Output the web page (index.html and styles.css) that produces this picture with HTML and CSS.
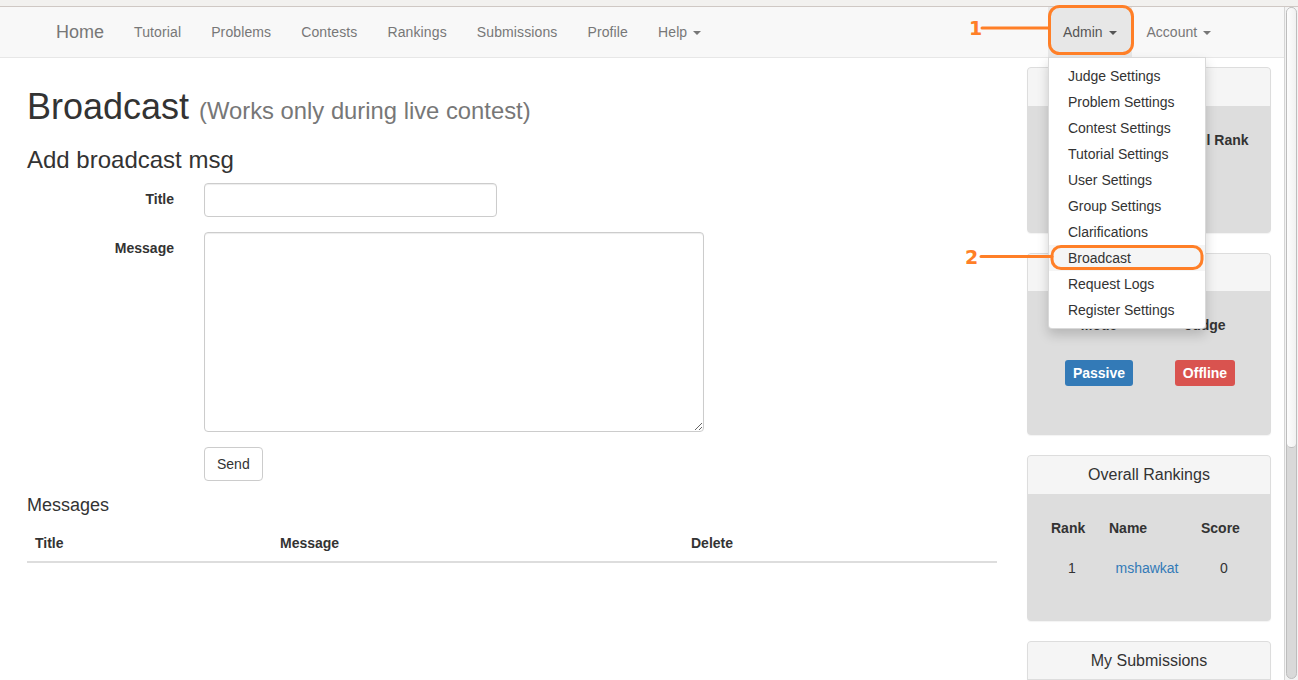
FILE: index.html
```html
<!DOCTYPE html>
<html lang="en">
<head>
<meta charset="utf-8">
<title>Broadcast</title>
<link rel="stylesheet" href="styles.css">
</head>
<body>
<div class="strip"></div>
<div class="window">
  <div class="page">
    <nav class="navbar">
      <ul class="nav">
        <li class="brand"><a href="#">Home</a></li>
        <li><a href="#">Tutorial</a></li>
        <li><a href="#">Problems</a></li>
        <li><a href="#">Contests</a></li>
        <li><a href="#">Rankings</a></li>
        <li><a href="#">Submissions</a></li>
        <li><a href="#">Profile</a></li>
        <li><a href="#">Help <span class="caret"></span></a></li>
      </ul>
      <ul class="nav nav-right">
        <li class="open"><a href="#">Admin <span class="caret"></span></a>
          <ul class="dropdown">
            <li><a href="#">Judge Settings</a></li>
            <li><a href="#">Problem Settings</a></li>
            <li><a href="#">Contest Settings</a></li>
            <li><a href="#">Tutorial Settings</a></li>
            <li><a href="#">User Settings</a></li>
            <li><a href="#">Group Settings</a></li>
            <li><a href="#">Clarifications</a></li>
            <li class="active"><a href="#">Broadcast</a></li>
            <li><a href="#">Request Logs</a></li>
            <li><a href="#">Register Settings</a></li>
          </ul>
        </li>
        <li><a href="#">Account <span class="caret"></span></a></li>
      </ul>
    </nav>

    <div class="content">
      <main class="main">
        <h1>Broadcast <small>(Works only during live contest)</small></h1>
        <h3>Add broadcast msg</h3>
        <form class="form">
          <div class="fgroup">
            <label for="title">Title</label>
            <div><input id="title" class="input-title" type="text"></div>
          </div>
          <div class="fgroup">
            <label for="msg">Message</label>
            <div><textarea id="msg" class="input-msg"></textarea></div>
          </div>
          <div class="fgroup">
            <span></span>
            <div><button type="button" class="btn">Send</button></div>
          </div>
        </form>
        <h4>Messages</h4>
        <table class="msg-table">
          <thead>
            <tr><th class="c-title">Title</th><th class="c-msg">Message</th><th class="c-del">Delete</th></tr>
          </thead>
        </table>
      </main>

      <aside class="sidebar">
        <div class="panel">
          <div class="panel-heading">My Status</div>
          <div class="panel-body">
            <table class="stbl two">
              <tr><th>Contest Rank</th><th>Overall Rank</th></tr>
              <tr class="datarow"><td>&nbsp;</td><td>&nbsp;</td></tr>
            </table>
          </div>
        </div>
        <div class="panel">
          <div class="panel-heading">Judge Status</div>
          <div class="panel-body body-judge">
            <table class="stbl two">
              <tr><th>Mode</th><th>Judge</th></tr>
              <tr class="badgerow"><td><span class="badge blue">Passive</span></td><td><span class="badge red">Offline</span></td></tr>
            </table>
          </div>
        </div>
        <div class="panel">
          <div class="panel-heading">Overall Rankings</div>
          <div class="panel-body">
            <table class="stbl three">
              <tr><th>Rank</th><th>Name</th><th>Score</th></tr>
              <tr class="datarow"><td>1</td><td><a href="#">mshawkat</a></td><td>0</td></tr>
            </table>
          </div>
        </div>
        <div class="panel">
          <div class="panel-heading">My Submissions</div>
          <div class="panel-body body-empty"></div>
        </div>
      </aside>
    </div>
  </div>
  <div class="scrollbar"><div class="track"><div class="thumb"></div></div></div>
</div>

<svg class="annot" width="1298" height="680" viewBox="0 0 1298 680">
  <rect x="1049.5" y="6.5" width="83" height="47" rx="10" ry="10" class="mark"/>
  <line x1="982" y1="28" x2="1049" y2="28" class="mark"/>
  <text x="969" y="35" class="num">1</text>
  <rect x="1052" y="246.5" width="150" height="22" rx="9" ry="9" class="mark"/>
  <line x1="981" y1="256.5" x2="1052" y2="256.5" class="mark"/>
  <text x="965" y="264" class="num">2</text>
</svg>
</body>
</html>
```

FILE: styles.css
```css
* { box-sizing: border-box; }

html, body {
  margin: 0;
  padding: 0;
  width: 1298px;
  height: 680px;
  overflow: hidden;
}

body {
  position: relative;
  font-family: "Liberation Sans", Arial, sans-serif;
  font-size: 14px;
  line-height: 20px;
  color: #333;
  background: #fff;
}

.strip {
  height: 7px;
  background: #f2f1ef;
  border-bottom: 1px solid #cfc8c4;
}

.window {
  display: flex;
  height: 673px;
}

.page {
  flex: 1;
  overflow: hidden;
  background: #fff;
}

/* navbar */
.navbar {
  display: flex;
  justify-content: space-between;
  height: 51px;
  padding: 0 58px 0 41px;
  background: #f8f8f8;
  border-bottom: 1px solid #e7e7e7;
}

.nav {
  display: flex;
  list-style: none;
  margin: 0;
  padding: 0;
}

.nav > li {
  position: relative;
}

.nav > li > a {
  display: block;
  padding: 15px;
  line-height: 20px;
  font-size: 14px;
  letter-spacing: 0.12px;
  color: #777;
  text-decoration: none;
}

.nav-right > li > a {
  letter-spacing: 0;
}

.nav > li.brand > a {
  font-size: 18px;
  letter-spacing: 0;
  color: #777;
}

.nav > li.open > a {
  background: #e7e7e7;
  color: #555;
}

.caret {
  display: inline-block;
  width: 0;
  height: 0;
  margin-left: 2px;
  vertical-align: middle;
  border-top: 4px solid;
  border-right: 4px solid transparent;
  border-left: 4px solid transparent;
}

.dropdown {
  position: absolute;
  top: 100%;
  left: 0;
  z-index: 10;
  width: 158px;
  margin: 0;
  padding: 5px 0;
  list-style: none;
  background: #fff;
  border: 1px solid rgba(0, 0, 0, .15);
  border-radius: 0 0 4px 4px;
  box-shadow: 0 6px 12px rgba(0, 0, 0, .175);
}

.dropdown li a {
  display: block;
  padding: 3px 19px;
  line-height: 20px;
  color: #333;
  text-decoration: none;
  white-space: nowrap;
}

.dropdown li.active a {
  background: #f5f5f5;
}

/* layout */
.content {
  display: flex;
  gap: 30px;
  padding: 0 13px 0 27px;
}

.main {
  flex: 1;
}

.sidebar {
  width: 244px;
  flex: none;
  margin-top: 9px;
}

h1 {
  margin: 29px 0 10px;
  font-size: 36px;
  line-height: 40px;
  font-weight: normal;
}

h1 small {
  font-size: 23.8px;
  color: #777;
}

h3 {
  margin: 16px 0 10px;
  font-size: 24px;
  line-height: 26.4px;
  font-weight: normal;
}

h4 {
  margin: 1px 0 10px;
  font-size: 18px;
  line-height: 19.8px;
  font-weight: normal;
}

/* form */
.form {
  margin: 0;
}

.fgroup {
  display: grid;
  grid-template-columns: 147px 1fr;
  column-gap: 30px;
  margin-bottom: 15px;
}

.fgroup label {
  text-align: right;
  font-weight: bold;
  padding-top: 6px;
  line-height: 20px;
}

.input-title,
.input-msg {
  display: block;
  font-family: "Liberation Sans", Arial, sans-serif;
  font-size: 14px;
  color: #555;
  background: #fff;
  border: 1px solid #ccc;
  border-radius: 4px;
  box-shadow: inset 0 1px 1px rgba(0, 0, 0, .075);
}

.input-title {
  width: 293px;
  height: 34px;
  padding: 6px 12px;
}

.input-msg {
  width: 500px;
  height: 200px;
  padding: 6px 12px;
  margin: 0;
}

.btn {
  display: inline-block;
  height: 34px;
  padding: 6px 12px;
  font-family: "Liberation Sans", Arial, sans-serif;
  font-size: 14px;
  line-height: 20px;
  color: #333;
  background: #fff;
  border: 1px solid #ccc;
  border-radius: 4px;
}

/* messages table */
.msg-table {
  width: 100%;
  border-collapse: collapse;
  table-layout: fixed;
}

.msg-table th {
  text-align: left;
  padding: 7px 8px 8px;
  line-height: 20px;
  border-bottom: 2px solid #ddd;
}

.c-title { width: 245px; }
.c-msg { width: 411px; }

/* panels */
.panel {
  margin-bottom: 20px;
  border: 1px solid #ddd;
  border-radius: 4px;
  background: #ddd;
  box-shadow: 0 1px 1px rgba(0, 0, 0, .05);
  overflow: hidden;
}

.panel-heading {
  padding: 10px 15px;
  font-size: 16px;
  line-height: 17.6px;
  text-align: center;
  color: #333;
  background: #f5f5f5;
  border-bottom: 1px solid #ddd;
}

.panel-body {
  padding: 15px 15px 30px;
  background: #ddd;
}

.body-judge {
  padding-bottom: 28px;
}

.body-empty {
  height: 120px;
}

.stbl {
  width: 100%;
  border-collapse: collapse;
  table-layout: fixed;
}

.stbl th {
  padding: 8px;
  line-height: 20px;
  font-weight: bold;
  white-space: nowrap;
}

.stbl td {
  text-align: center;
  line-height: 20px;
}

.stbl.two th { text-align: center; }
.stbl.two th:first-child { width: 112px; }

.stbl.three th { text-align: left; }
.stbl.three th:nth-child(1) { width: 58px; }
.stbl.three th:nth-child(2) { width: 92px; }

.datarow td {
  padding: 12px 8px;
}

.badgerow td {
  padding: 17px 8px 20px;
}

.stbl a {
  color: #337ab7;
  text-decoration: none;
}

.badge {
  display: inline-block;
  padding: 3px 8px;
  line-height: 20px;
  font-weight: bold;
  color: #fff;
  border-radius: 3px;
}

.badge.blue { background: #337ab7; }
.badge.red { background: #d9534f; }

/* fake scrollbar */
.scrollbar {
  width: 14px;
  flex: none;
  padding: 0 1px 1px 1px;
  background: #f3f3f3;
  border-left: 1px solid #d6d6d6;
  display: flex;
}

.track {
  flex: 1;
  display: flex;
  flex-direction: column;
  background: #d9d9d9;
  border: 1px solid #bdbdbd;
  border-radius: 6px;
  overflow: hidden;
}

.thumb {
  height: 440px;
  background: linear-gradient(to right, #fdfdfd, #f1f1f1);
  border-bottom: 1px solid #bdbdbd;
  border-radius: 0 0 6px 6px;
}

/* annotations */
.annot {
  position: absolute;
  top: 0;
  left: 0;
  pointer-events: none;
  z-index: 20;
}

.annot .mark {
  fill: none;
  stroke: #ff7f27;
  stroke-width: 3;
  stroke-linecap: round;
}

.annot .num {
  fill: #ff7f27;
  font-family: "DejaVu Sans", sans-serif;
  font-weight: bold;
  font-size: 19px;
}
```
